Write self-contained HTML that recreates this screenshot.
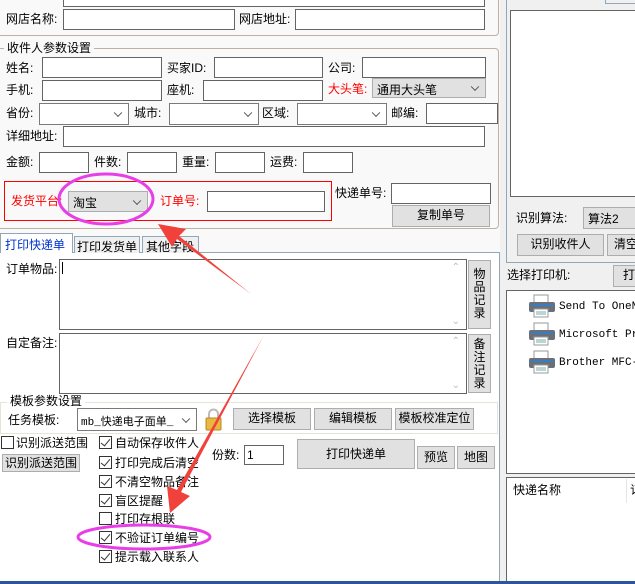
<!DOCTYPE html>
<html><head><meta charset="utf-8"><style>
*{box-sizing:border-box;margin:0;padding:0}
body{width:635px;height:584px;overflow:hidden;background:#f0f0f0;position:relative;font-family:"Liberation Sans","Noto Sans CJK SC",sans-serif;font-size:12px;color:#000}
.a{position:absolute;white-space:nowrap}
.l{position:absolute;white-space:nowrap;line-height:14px}
.i{position:absolute;background:#fff;border:1px solid #646464}
.s{position:absolute;background:#fff;border:1px solid #7a7a7a}
.s:after{content:"";position:absolute;right:7px;top:50%;width:5px;height:5px;border-right:1px solid #555;border-bottom:1px solid #555;transform:translateY(-70%) rotate(45deg)}
.g{background:#e1e1e1;border:1px solid #adadad}
.b{position:absolute;background:#e1e1e1;border:1px solid #adadad;text-align:center;line-height:19px}
.cb{position:absolute;width:13px;height:13px;border:1px solid #333;background:#fff}
.cb.c:after{content:"";position:absolute;left:3px;top:0px;width:4px;height:8px;border-right:1.5px solid #333;border-bottom:1.5px solid #333;transform:rotate(40deg)}
.red{color:#f00}
.mono{font-family:"Liberation Mono",monospace;font-size:11px}
</style></head><body>
<div class="a" style="left:0;top:0;width:500px;height:258px;background:#f9f9f9"></div>
<div class="a" style="left:0;top:252px;width:500px;height:332px;background:#fff"></div>
<!-- group 1 -->
<div class="a" style="left:-5px;top:-10px;width:504px;height:46px;border:1px solid #bcb1a3;border-radius:4px"></div>
<div class="i" style="left:63px;top:-4px;width:422px;height:11px"></div>
<div class="l" style="left:6px;top:12px">网店名称:</div>
<div class="i" style="left:63px;top:9px;width:172px;height:21px"></div>
<div class="l" style="left:239px;top:12px">网店地址:</div>
<div class="i" style="left:295px;top:9px;width:190px;height:21px"></div>
<!-- group 2 -->
<div class="a" style="left:-5px;top:48px;width:504px;height:181px;border:1px solid #bcb1a3;border-radius:4px"></div>
<div class="l" style="left:4px;top:41px;background:#f9f9f9;padding:0 3px">收件人参数设置</div>
<div class="l" style="left:6px;top:61px">姓名:</div><div class="i" style="left:42px;top:57px;width:120px;height:21px"></div>
<div class="l" style="left:167px;top:61px">买家ID:</div><div class="i" style="left:214px;top:57px;width:109px;height:21px"></div>
<div class="l" style="left:328px;top:61px">公司:</div><div class="i" style="left:362px;top:57px;width:124px;height:21px"></div>
<div class="l" style="left:6px;top:83px">手机:</div><div class="i" style="left:42px;top:80px;width:120px;height:21px"></div>
<div class="l" style="left:167px;top:83px">座机:</div><div class="i" style="left:203px;top:80px;width:120px;height:21px"></div>
<div class="l red" style="left:328px;top:82px">大头笔:</div><div class="s g" style="left:372px;top:78px;width:114px;height:20px"><span class="a" style="left:4px;top:2px">通用大头笔</span></div>
<div class="l" style="left:6px;top:106px">省份:</div><div class="s" style="left:39px;top:103px;width:90px;height:22px"></div>
<div class="l" style="left:134px;top:106px">城市:</div><div class="s" style="left:169px;top:103px;width:90px;height:22px"></div>
<div class="l" style="left:262px;top:106px">区域:</div><div class="s" style="left:297px;top:103px;width:90px;height:22px"></div>
<div class="l" style="left:391px;top:106px">邮编:</div><div class="i" style="left:426px;top:103px;width:72px;height:21px"></div>
<div class="l" style="left:6px;top:129px">详细地址:</div><div class="i" style="left:63px;top:126px;width:422px;height:21px"></div>
<div class="l" style="left:6px;top:155px">金额:</div><div class="i" style="left:39px;top:152px;width:50px;height:21px"></div>
<div class="l" style="left:94px;top:155px">件数:</div><div class="i" style="left:127px;top:152px;width:50px;height:21px"></div>
<div class="l" style="left:182px;top:155px">重量:</div><div class="i" style="left:215px;top:152px;width:50px;height:21px"></div>
<div class="l" style="left:270px;top:155px">运费:</div><div class="i" style="left:303px;top:152px;width:50px;height:21px"></div>
<div class="a" style="left:4px;top:181px;width:328px;height:40px;border:1px solid #f00"></div>
<div class="l red" style="left:11px;top:194px">发货平台:</div>
<div class="s g" style="left:68px;top:191px;width:80px;height:21px"><span class="a" style="left:4px;top:2px">淘宝</span></div>
<div class="l red" style="left:160px;top:194px">订单号:</div><div class="i" style="left:207px;top:191px;width:118px;height:21px"></div>
<div class="l" style="left:335px;top:186px">快递单号:</div><div class="i" style="left:391px;top:183px;width:100px;height:21px"></div>
<div class="b" style="left:392px;top:205px;width:98px;height:22px">复制单号</div>
<!-- tabs -->
<div class="a" style="left:0;top:252px;width:500px;height:1px;background:#8fa7b8"></div>
<div class="a" style="left:499px;top:252px;width:1px;height:332px;background:#8fa7b8"></div>
<div class="a" style="left:0;top:233px;width:73px;height:20px;background:#fff;border:1px solid #8fa7b8;border-bottom:none;color:#0033cc;padding:2px 0 0 4px">打印快递单</div>
<div class="a" style="left:74px;top:236px;width:66px;height:17px;border:1px solid #8fa7b8;border-bottom:none;padding:1px 0 0 2px;background:#f0f0f0">打印发货单</div>
<div class="a" style="left:142px;top:236px;width:57px;height:17px;border:1px solid #8fa7b8;border-bottom:none;padding:1px 0 0 3px;background:#f0f0f0">其他字段</div>
<div class="l" style="left:6px;top:262px">订单物品:</div>
<div class="i" style="left:59px;top:259px;width:408px;height:71px"><div class="a" style="left:2px;top:2px;width:1px;height:12px;background:#000"></div><span class="a" style="right:6px;top:2px;color:#c8bca8;font-size:10px">⌃</span><span class="a" style="right:6px;bottom:2px;color:#c8bca8;font-size:10px">⌄</span></div>
<div class="b" style="left:468px;top:260px;width:23px;height:69px;line-height:13px;padding-top:7px;white-space:normal">物品记录</div>
<div class="l" style="left:6px;top:336px">自定备注:</div>
<div class="i" style="left:59px;top:333px;width:408px;height:61px"><span class="a" style="right:6px;top:2px;color:#c8bca8;font-size:10px">⌃</span><span class="a" style="right:6px;bottom:2px;color:#c8bca8;font-size:10px">⌄</span></div>
<div class="b" style="left:468px;top:334px;width:23px;height:59px;line-height:13px;padding-top:3px;white-space:normal">备注记录</div>
<div class="a" style="left:0;top:402px;width:498px;height:32px;border:1px solid #e8e3d8"></div>
<div class="l" style="left:7px;top:394px;background:#fff;padding:0 3px">模板参数设置</div>
<div class="l" style="left:8px;top:413px">任务模板:</div>
<div class="s" style="left:77px;top:408px;width:120px;height:23px"><span class="a mono" style="left:3px;top:4px;font-family:'Liberation Mono','Noto Sans CJK SC',monospace">mb_快递电子面单_</span></div>
<svg class="a" style="left:204px;top:407px" width="19" height="24"><path d="M5 11V7a4.5 4.5 0 0 1 9 0v4" fill="none" stroke="#bbb" stroke-width="2"/><rect x="2" y="11" width="15" height="12" rx="1" fill="#e8b840" stroke="#b88a20"/></svg>
<div class="b" style="left:233px;top:408px;width:78px;height:22px">选择模板</div>
<div class="b" style="left:314px;top:408px;width:78px;height:22px">编辑模板</div>
<div class="b" style="left:395px;top:408px;width:79px;height:22px">模板校准定位</div>
<div class="cb" style="left:1px;top:436px"></div><div class="l" style="left:16px;top:436px">识别派送范围</div>
<div class="b" style="left:2px;top:454px;width:78px;height:18px;line-height:16px">识别派送范围</div>
<div class="cb c" style="left:99px;top:436px"></div><div class="l" style="left:115px;top:436px">自动保存收件人</div>
<div class="cb c" style="left:99px;top:456px"></div><div class="l" style="left:115px;top:456px">打印完成后清空</div>
<div class="cb c" style="left:99px;top:475px"></div><div class="l" style="left:115px;top:475px">不清空物品备注</div>
<div class="cb c" style="left:99px;top:494px"></div><div class="l" style="left:115px;top:494px">盲区提醒</div>
<div class="cb" style="left:99px;top:512px"></div><div class="l" style="left:115px;top:512px">打印存根联</div>
<div class="cb c" style="left:99px;top:531px"></div><div class="l" style="left:115px;top:531px">不验证订单编号</div>
<div class="cb c" style="left:99px;top:550px"></div><div class="l" style="left:115px;top:550px">提示载入联系人</div>
<div class="l" style="left:212px;top:448px">份数:</div><div class="i" style="left:244px;top:445px;width:40px;height:20px"><span class="a" style="left:2px;top:2px">1</span></div>
<div class="b" style="left:297px;top:439px;width:118px;height:30px;line-height:28px">打印快递单</div>
<div class="b" style="left:417px;top:446px;width:38px;height:23px;line-height:21px">预览</div>
<div class="b" style="left:457px;top:446px;width:38px;height:23px;line-height:21px">地图</div>
<!-- right panel -->
<div class="a" style="left:506px;top:-2px;width:140px;height:265px;border:1px solid #8fa7b8"></div>
<div class="a" style="left:605px;top:-4px;width:40px;height:8px;border:1px solid #8fa7b8;background:#f0f0f0"></div>
<div class="i" style="left:510px;top:10px;width:130px;height:187px"></div>
<div class="l" style="left:516px;top:211px">识别算法:</div>
<div class="a g" style="left:583px;top:207px;width:60px;height:22px;padding:2px 0 0 4px">算法2</div>
<div class="b" style="left:517px;top:234px;width:87px;height:22px">识别收件人</div>
<div class="b" style="left:607px;top:234px;width:40px;height:22px;text-align:left;padding-left:6px">清空</div>
<div class="l" style="left:507px;top:268px">选择打印机:</div>
<div class="b" style="left:613px;top:265px;width:30px;height:22px;text-align:left;padding-left:9px">打</div>
<div class="i" style="left:506px;top:290px;width:140px;height:184px"></div>
<svg class="a" style="left:528px;top:294px" width="28" height="84">
<g id="p"><rect x="6" y="1" width="14" height="8" fill="#fff" stroke="#999"/><rect x="1" y="8" width="26" height="10" rx="2" fill="#6b6f78"/><rect x="3" y="10" width="22" height="2" fill="#3a7cc0"/><rect x="6" y="15" width="14" height="8" fill="#fff" stroke="#999"/><line x1="8" y1="18" x2="18" y2="18" stroke="#7aa"/><line x1="8" y1="20" x2="18" y2="20" stroke="#7aa"/></g>
<use href="#p" y="28"/><use href="#p" y="56"/></svg>
<div class="l mono" style="left:559px;top:300px">Send To OneNote</div>
<div class="l mono" style="left:559px;top:328px">Microsoft Print</div>
<div class="l mono" style="left:559px;top:356px">Brother MFC-J</div>
<div class="i" style="left:506px;top:477px;width:140px;height:106px"></div>
<div class="l" style="left:513px;top:483px">快递名称</div>
<div class="a" style="left:626px;top:479px;width:1px;height:24px;background:#e5e5e5"></div>
<div class="l" style="left:630px;top:483px">订</div>
<div class="a" style="left:0;top:581px;width:635px;height:3px;background:#2b5797"></div>
<!-- annotations -->
<svg class="a" style="left:0;top:0" width="635" height="584">
<ellipse cx="106" cy="199" rx="47" ry="25" fill="none" stroke="#e83ee8" stroke-width="3"/>
<ellipse cx="144" cy="537" rx="66" ry="12" fill="none" stroke="#e83ee8" stroke-width="3"/>
<polygon points="158,224 186,229 179,236 251,294 177,239 172,247" fill="#f0423a"/>
<polygon points="170,513 167,486 177,490 264,335 181,492 190,496" fill="#f0423a"/>
</svg>
</body></html>
